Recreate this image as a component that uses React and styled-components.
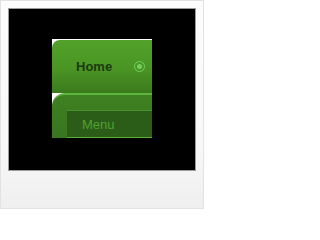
import React from 'react'
import styled, { createGlobalStyle } from 'styled-components'

const GlobalStyle = createGlobalStyle`
  html, body {
    margin: 0;
    padding: 0;
    background: #ffffff;
  }
  body {
    font-family: 'Liberation Sans', Arial, sans-serif;
  }
`

// Frame around the preview
const Frame = styled.div`
  box-sizing: border-box;
  width: 204px;
  height: 209px;
  padding: 7px;
  border: 1px solid #e2e2e2;
  background: linear-gradient(#fdfdfd 0%, #f8f8f8 70%, #efefef 100%);
`

const Stage = styled.div`
  box-sizing: border-box;
  width: 188px;
  height: 163px;
  border: 1px solid #9c9c9c;
  background: #000000;
  display: flex;
  justify-content: center;
  padding-top: 30px;
`

const Panel = styled.div`
  width: 100px;
  height: 99px;
  background: #ffffff;
  padding-top: 1px;
  box-sizing: border-box;
  display: flex;
  flex-direction: column;
`

const ActiveItem = styled.div`
  height: 53px;
  display: flex;
  align-items: center;
  justify-content: space-between;
  padding: 0 7px 0 24px;
  border-top-left-radius: 8px;
  background: linear-gradient(#52a22a 0%, #4a9424 55%, #3b7a1d 100%);
`

const ItemLabel = styled.span`
  font-size: 13px;
  font-weight: bold;
  color: #1b3a0f;
`

const Radio = styled.span`
  box-sizing: border-box;
  width: 11px;
  height: 11px;
  border-radius: 50%;
  border: 1.5px solid #72d062;
  display: flex;
  align-items: center;
  justify-content: center;
  &::after {
    content: '';
    width: 5px;
    height: 5px;
    border-radius: 50%;
    background: #72d062;
  }
`

const SubSection = styled.div`
  flex: 1;
  display: flex;
  flex-direction: column;
  justify-content: flex-end;
  padding-left: 15px;
  border-top: 2px solid #5db53b;
  border-top-left-radius: 13px;
  background: linear-gradient(#3f8121 0%, #387520 100%);
`

const SubItem = styled.div`
  height: 28px;
  box-sizing: border-box;
  display: flex;
  align-items: center;
  padding-left: 15px;
  background: #2c5d18;
  border-top: 1px solid #4a9230;
  border-bottom: 1px solid #5aae3a;
  font-size: 13px;
  color: #4ea22d;
`

export default function App() {
  return (
    <>
      <GlobalStyle />
      <Frame>
        <Stage>
          <Panel>
            <ActiveItem>
              <ItemLabel>Home</ItemLabel>
              <Radio />
            </ActiveItem>
            <SubSection>
              <SubItem>Menu</SubItem>
            </SubSection>
          </Panel>
        </Stage>
      </Frame>
    </>
  )
}
